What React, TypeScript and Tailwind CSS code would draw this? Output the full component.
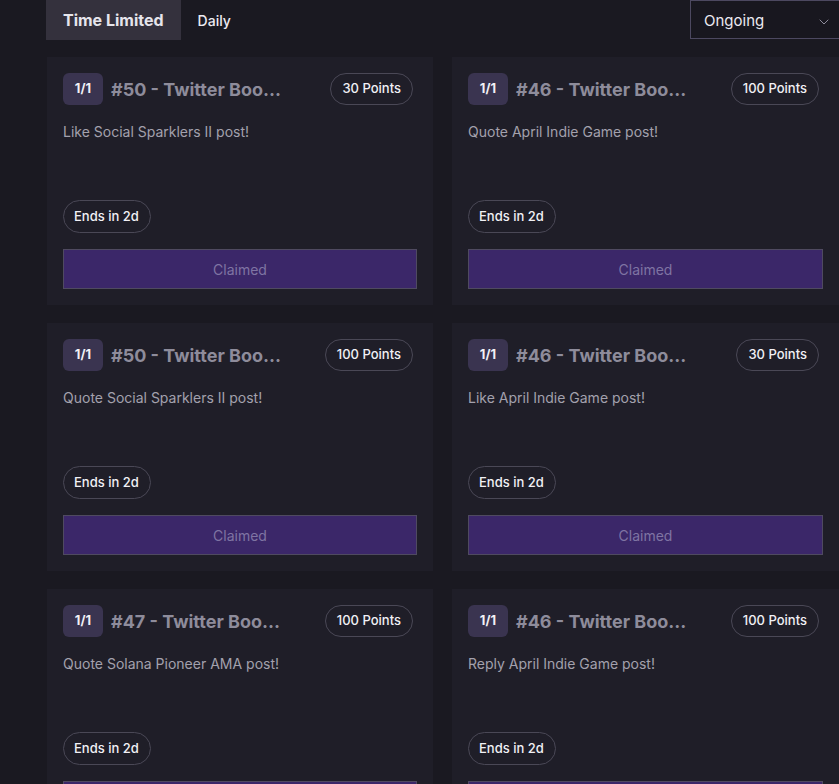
import { ChevronDown } from "lucide-react";

interface Quest {
  id: string;
  title: string;
  points: number;
  text: string;
}

const quests: Quest[] = [
  { id: "a", title: "#50 - Twitter Boo...", points: 30, text: "Like Social Sparklers II post!" },
  { id: "b", title: "#46 - Twitter Boo...", points: 100, text: "Quote April Indie Game post!" },
  { id: "c", title: "#50 - Twitter Boo...", points: 100, text: "Quote Social Sparklers II post!" },
  { id: "d", title: "#46 - Twitter Boo...", points: 30, text: "Like April Indie Game post!" },
  { id: "e", title: "#47 - Twitter Boo...", points: 100, text: "Quote Solana Pioneer AMA post!" },
  { id: "f", title: "#46 - Twitter Boo...", points: 100, text: "Reply April Indie Game post!" },
];

function QuestCard({ q }: { q: Quest }) {
  return (
    <div className="flex h-[248px] flex-col bg-[#1f1e28] px-4 pt-4 pb-4">
      <div className="flex items-center">
        <span className="flex h-8 w-10 items-center justify-center rounded-md bg-[#3a3450] text-[13px] font-bold text-[#f1f0f5]">
          1/1
        </span>
        <span className="ml-2 whitespace-nowrap text-[18px] font-bold text-[#8e8c9b]">{q.title}</span>
        <span className="mr-[4px] ml-auto flex h-8 items-center rounded-full border border-[#4a4856] pr-[11px] pl-[11px] text-[13px] font-medium text-[#f1f0f5]">
          {q.points} Points
        </span>
      </div>
      <p className="mt-[17px] text-[14px] leading-5 text-[#a3a1ad]">{q.text}</p>
      <div className="flex-1" />
      <span className="flex h-[33px] w-fit items-center rounded-full border border-[#4a4856] pr-[11px] pl-[10px] text-[13px] font-medium text-[#f1f0f5]">
        Ends in 2d
      </span>
      <button className="mt-4 h-10 w-full border border-[#4f4a60] bg-[#3b2769] text-[14px] text-[#7f74a3]">
        Claimed
      </button>
    </div>
  );
}

export default function App() {
  return (
    <div
      className="h-[784px] w-[839px] overflow-hidden bg-[#1a1921] pl-[46px]"
      style={{ fontFamily: "Inter, 'Noto Sans', sans-serif" }}
    >
      <div className="flex h-10 items-stretch">
        <div className="flex items-center bg-[#34313d] px-[17px] text-[16px] font-bold text-[#e6e5ec]">Time Limited</div>
        <div className="flex items-center px-[17px] text-[14px] font-medium text-[#eceaf1]">Daily</div>
        <div className="ml-auto flex h-[39px] w-[149px] items-center border border-y border-l border-r-0 border-[#4c4860] bg-[#18171f] pt-[4px] pl-[13px] text-[15px] text-[#eceaf1]">
          Ongoing
          <ChevronDown className="ml-auto mr-[7px] h-4 w-4 text-[#8f8c9c]" strokeWidth={1.5} />
        </div>
      </div>
      <div className="mt-[17px] grid w-[793px] grid-cols-[386px_387px] gap-x-[19px] gap-y-[18px] pl-px">
        {quests.map((q) => (
          <QuestCard key={q.id} q={q} />
        ))}
      </div>
    </div>
  );
}
